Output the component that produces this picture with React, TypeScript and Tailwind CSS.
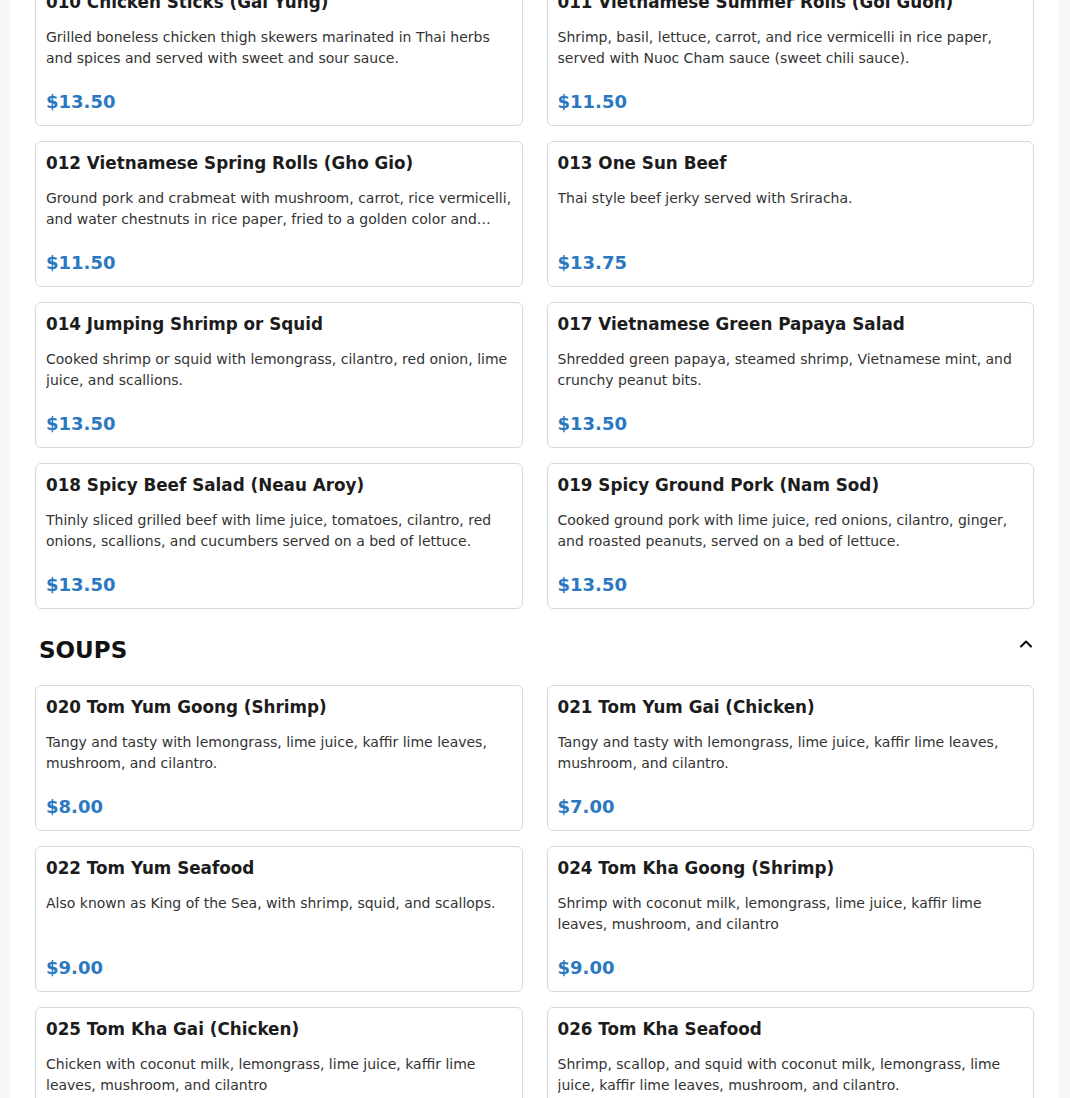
import { ChevronUp } from "lucide-react";

type Item = { name: string; desc: string; price: string };

const appetizers: Item[] = [
    {
        name: "010 Chicken Sticks (Gai Yung)",
        desc: "Grilled boneless chicken thigh skewers marinated in Thai herbs and spices and served with sweet and sour sauce.",
        price: "$13.50",
    },
    {
        name: "011 Vietnamese Summer Rolls (Goi Guon)",
        desc: "Shrimp, basil, lettuce, carrot, and rice vermicelli in rice paper, served with Nuoc Cham sauce (sweet chili sauce).",
        price: "$11.50",
    },
    {
        name: "012 Vietnamese Spring Rolls (Gho Gio)",
        desc: "Ground pork and crabmeat with mushroom, carrot, rice vermicelli, and water chestnuts in rice paper, fried to a golden color and served with sweet chili sauce.",
        price: "$11.50",
    },
    {
        name: "013 One Sun Beef",
        desc: "Thai style beef jerky served with Sriracha.",
        price: "$13.75",
    },
    {
        name: "014 Jumping Shrimp or Squid",
        desc: "Cooked shrimp or squid with lemongrass, cilantro, red onion, lime juice, and scallions.",
        price: "$13.50",
    },
    {
        name: "017 Vietnamese Green Papaya Salad",
        desc: "Shredded green papaya, steamed shrimp, Vietnamese mint, and crunchy peanut bits.",
        price: "$13.50",
    },
    {
        name: "018 Spicy Beef Salad (Neau Aroy)",
        desc: "Thinly sliced grilled beef with lime juice, tomatoes, cilantro, red onions, scallions, and cucumbers served on a bed of lettuce.",
        price: "$13.50",
    },
    {
        name: "019 Spicy Ground Pork (Nam Sod)",
        desc: "Cooked ground pork with lime juice, red onions, cilantro, ginger, and roasted peanuts, served on a bed of lettuce.",
        price: "$13.50",
    },
];

const soups: Item[] = [
    {
        name: "020 Tom Yum Goong (Shrimp)",
        desc: "Tangy and tasty with lemongrass, lime juice, kaffir lime leaves, mushroom, and cilantro.",
        price: "$8.00",
    },
    {
        name: "021 Tom Yum Gai (Chicken)",
        desc: "Tangy and tasty with lemongrass, lime juice, kaffir lime leaves, mushroom, and cilantro.",
        price: "$7.00",
    },
    {
        name: "022 Tom Yum Seafood",
        desc: "Also known as King of the Sea, with shrimp, squid, and scallops.",
        price: "$9.00",
    },
    {
        name: "024 Tom Kha Goong (Shrimp)",
        desc: "Shrimp with coconut milk, lemongrass, lime juice, kaffir lime leaves, mushroom, and cilantro",
        price: "$9.00",
    },
    {
        name: "025 Tom Kha Gai (Chicken)",
        desc: "Chicken with coconut milk, lemongrass, lime juice, kaffir lime leaves, mushroom, and cilantro",
        price: "$9.00",
    },
    {
        name: "026 Tom Kha Seafood",
        desc: "Shrimp, scallop, and squid with coconut milk, lemongrass, lime juice, kaffir lime leaves, mushroom, and cilantro.",
        price: "$10.00",
    },
];

const MenuCard = ({ item }: { item: Item }) => (
    <div className="rounded-md border border-[#d9d9d9] bg-white p-[10px]">
        <h3 className="text-[16.8px] leading-[22px] font-bold text-[#1c1c1c] truncate">{item.name}</h3>
        <p className="mt-[14px] h-[42px] text-sm leading-[21px] text-[#333] line-clamp-2">{item.desc}</p>
        <div className="mt-[19px] text-lg leading-[27px] font-bold text-[#2b78c2]">{item.price}</div>
    </div>
);

const App = () => {
    return (
        <div className="min-h-screen bg-[#f7f7f7] font-['DejaVu_Sans',sans-serif]">
            <div className="ml-[10px] mr-[11px] min-h-screen bg-white px-[25px] pb-10 overflow-hidden">
                <div className="-mt-[20px] grid grid-cols-2 gap-x-6 gap-y-[15px]">
                    {appetizers.map((item) => (
                        <MenuCard key={item.name} item={item} />
                    ))}
                </div>

                <div className="mt-[25px] flex items-start justify-between pl-1">
                    <h2 className="text-[23px] leading-8 font-bold text-[#111]">SOUPS</h2>
                    <ChevronUp size={20} strokeWidth={2.5} className="-mr-[2px] text-[#111]" />
                </div>

                <div className="mt-[19px] grid grid-cols-2 gap-x-6 gap-y-[15px]">
                    {soups.map((item) => (
                        <MenuCard key={item.name} item={item} />
                    ))}
                </div>
            </div>
        </div>
    );
};

export default App;
